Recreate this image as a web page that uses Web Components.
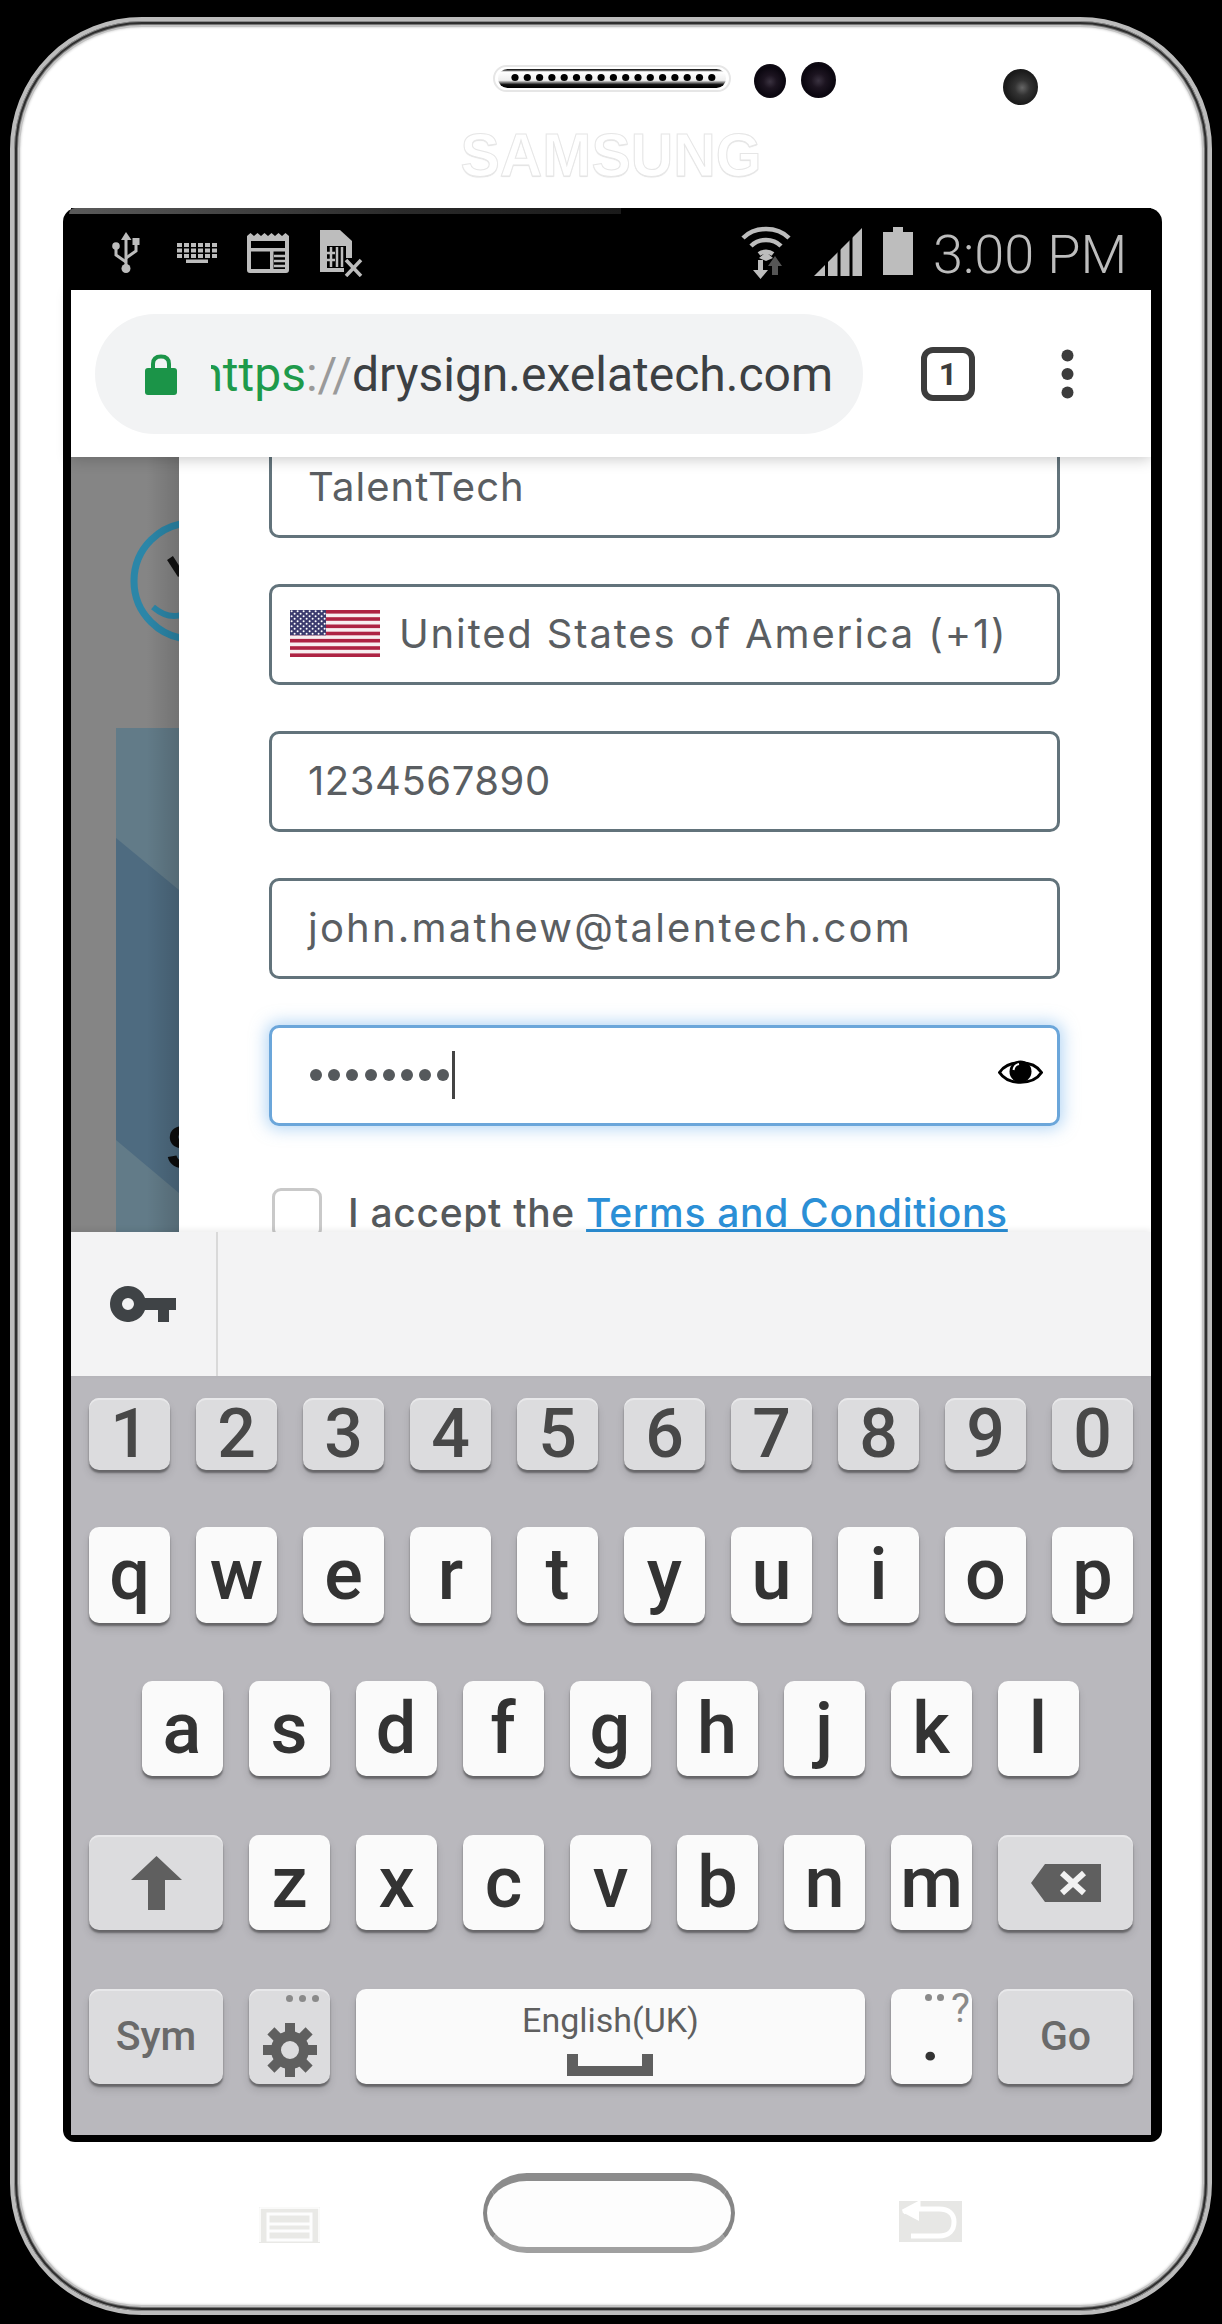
<!DOCTYPE html>
<html lang="en">
<head>
<meta charset="utf-8">
<title>Sign up</title>
<style>
  html, body { margin: 0; background: #000; }
  body { width: 1222px; height: 2324px; overflow: hidden; font-family: Roboto, sans-serif; }
</style>
</head>
<body>
<phone-frame>
  <status-bar slot="screen"></status-bar>
  <browser-bar slot="screen"></browser-bar>
  <page-view slot="screen">
    <form-field style="letter-spacing:1.05px">TalentTech</form-field>
    <form-field style="letter-spacing:1.85px">
      <svg slot="lead" width="90" height="47" viewBox="0 0 90 47">
        <defs>
          <pattern id="stars" width="6" height="5" patternUnits="userSpaceOnUse"><circle cx="1.6" cy="1.3" r="1" fill="#fff"/><circle cx="4.6" cy="3.8" r="1" fill="#fff"/></pattern>
        </defs>
        <rect width="90" height="47" fill="#f8eef0"/>
        <g fill="#ae2343">
          <rect y="0" width="90" height="3.6"/><rect y="7.2" width="90" height="3.6"/><rect y="14.5" width="90" height="3.6"/><rect y="21.7" width="90" height="3.6"/><rect y="28.9" width="90" height="3.6"/><rect y="36.2" width="90" height="3.6"/><rect y="43.4" width="90" height="3.6"/>
        </g>
        <rect width="36" height="25.3" fill="#3c3b6e"/>
        <rect width="36" height="25.3" fill="url(#stars)"/>
      </svg>
      United States of America (+1)
    </form-field>
    <form-field style="letter-spacing:.55px">1234567890</form-field>
    <form-field style="letter-spacing:2.2px">john.mathew@talentech.com</form-field>
    <form-field focused>
      <pass-dots count="8"></pass-dots>
      <svg slot="trail" width="45" height="29" viewBox="0 0 45 29">
        <path d="M1.5 14.5C10 1.5 35 1.5 43.5 14.5 35 27.5 10 27.5 1.5 14.5Z" fill="none" stroke="#000" stroke-width="3"/>
        <circle cx="22.5" cy="13.5" r="11" fill="#000"/>
        <path d="M15.5 12C16 8.5 18.5 6.5 21 6" fill="none" stroke="#fff" stroke-width="2"/>
      </svg>
    </form-field>
    <terms-row>I accept the <a>Terms and Conditions</a></terms-row>
  </page-view>
  <suggest-bar slot="screen"></suggest-bar>
  <key-board slot="screen">
    <kb-row h="72" top="22">
      <kb-key kind="num">1</kb-key><kb-key kind="num">2</kb-key><kb-key kind="num">3</kb-key><kb-key kind="num">4</kb-key><kb-key kind="num">5</kb-key><kb-key kind="num">6</kb-key><kb-key kind="num">7</kb-key><kb-key kind="num">8</kb-key><kb-key kind="num">9</kb-key><kb-key kind="num">0</kb-key>
    </kb-row>
    <kb-row h="96" top="57">
      <kb-key>q</kb-key><kb-key>w</kb-key><kb-key>e</kb-key><kb-key>r</kb-key><kb-key>t</kb-key><kb-key>y</kb-key><kb-key>u</kb-key><kb-key>i</kb-key><kb-key>o</kb-key><kb-key>p</kb-key>
    </kb-row>
    <kb-row h="95" top="58" style="padding-right:2px">
      <kb-key>a</kb-key><kb-key>s</kb-key><kb-key>d</kb-key><kb-key>f</kb-key><kb-key>g</kb-key><kb-key>h</kb-key><kb-key>j</kb-key><kb-key>k</kb-key><kb-key>l</kb-key>
    </kb-row>
    <kb-row h="95" top="59">
      <kb-key kind="func" w="134"><svg width="51" height="54" viewBox="0 0 51 54"><path d="M25.5 0 51 24H34V54H17V24H0Z" fill="#5f5f5f"/></svg></kb-key>
      <kb-key>z</kb-key><kb-key>x</kb-key><kb-key>c</kb-key><kb-key>v</kb-key><kb-key>b</kb-key><kb-key>n</kb-key><kb-key>m</kb-key>
      <kb-key kind="func" w="135"><svg width="70" height="38" viewBox="0 0 70 38"><path d="M14 0H70V38H14L0 19Z" fill="#5f5f5f"/><path d="M31 9 53 29M53 9 31 29" stroke="#f2f2f2" stroke-width="6"/></svg></kb-key>
    </kb-row>
    <kb-row h="95" top="59">
      <kb-key kind="func" w="134" size="41">Sym</kb-key>
      <kb-key kind="func">
        <key-dots slot="over" style="top:6px;right:11px"></key-dots>
        <svg style="margin-top:26px" width="54" height="54" viewBox="0 0 54 54"><g fill="#5f5f5f"><rect x="22" y="0" width="10" height="54"/><rect x="0" y="22" width="54" height="10"/><rect x="22" y="0" width="10" height="54" transform="rotate(45 27 27)"/><rect x="22" y="0" width="10" height="54" transform="rotate(-45 27 27)"/></g><circle cx="27" cy="27" r="14" fill="#dcdcde" stroke="#5f5f5f" stroke-width="10"/></svg>
      </kb-key>
      <kb-key w="509" size="34" weight="400" color="#5f5f5f">
        <space-label>English(UK)</space-label>
      </kb-key>
      <kb-key>
        <period-mark slot="over"></period-mark>
      </kb-key>
      <kb-key kind="func" w="135" size="41">Go</kb-key>
    </kb-row>
  </key-board>
</phone-frame>

<script>
class PhoneFrame extends HTMLElement {
  constructor() {
    super();
    this.attachShadow({ mode: "open" });
    let dots = "";
    for (let i = 0; i < 17; i++) dots += `<circle cx="${22 + i * 12.3}" cy="12.5" r="3.6" fill="#000"/>`;
    this.shadowRoot.innerHTML = /* html */`
      <style>
        :host {
          display: block; box-sizing: border-box;
          width: 1202px; height: 2298px; margin: 17px 0 0 10px;
          background: #fff;
          border: 4px solid #bcbcbc;
          border-radius: 132px;
          box-shadow: inset 0 0 0 1px #888, inset 0 0 0 3px #2e2e2e, inset 0 0 0 4px #777, inset 0 0 0 6px #c4c4c4, inset 0 0 2px 7px #e2e2e2;
        }
        .head { height: 187px; box-sizing: border-box; }
        .row { display: flex; align-items: flex-start; padding-left: 479px; }
        .speaker { margin-top: 44px; }
        .cam { border-radius: 50%; flex: none; background: radial-gradient(circle at 50% 52%, #3a3240 0, #1c1420 28%, #0b0710 60%, #17121b 100%); }
        .cam1 { width: 32px; height: 34px; margin: 43px 0 0 23px; }
        .cam2 { width: 35px; height: 36px; margin: 41px 0 0 15px; }
        .cam3 { width: 35px; height: 36px; margin: 48px 0 0 167px; background: radial-gradient(circle at 55% 52%, #666 0, #333 28%, #1c1c1c 60%, #111 100%); }
        .brand {
          font: 700 62px/1 "Liberation Sans", sans-serif; color: #fff;
          -webkit-text-stroke: 1px #e6e6e6;
          margin: 19px 0 0 439px; width: 300px; text-align: center;
          transform: scaleX(.95); transform-origin: center;
          text-shadow: 0 1px 1px #e0e0e0;
        }
        .screen {
          position: relative; box-sizing: border-box; width: 1099px; margin-left: 49px;
          background: #000; padding: 0 11px 7px 8px;
          border-radius: 14px 14px 12px 12px;
        }
        .screen::before {
          content: ""; position: absolute; left: 6px; top: 0; width: 552px; height: 6px;
          background: linear-gradient(90deg, #5a5a5a, #2a2a2a 60%, #1a1a1a);
          border-radius: 10px 0 0 0;
        }
        .foot { display: flex; align-items: flex-start; padding-left: 245px; }
        .menu { margin-top: 65px; }
        .home {
          box-sizing: border-box; width: 252px; height: 80px; margin: 31px 0 0 163px;
          border-radius: 46px / 42px; background: #fdfdfd;
          border: 4px solid #868686; border-top-width: 8px; border-bottom-width: 6px;
          border-top-color: #8c8c8c; border-bottom-color: #a0a0a0;
        }
        .back { margin: 59px 0 0 164px; }
      </style>
      <div class="head">
        <div class="row">
          <svg class="speaker" width="238" height="27" viewBox="0 0 238 27">
            <defs><linearGradient id="g" x1="0" y1="0" x2="0" y2="1"><stop offset=".05" stop-color="#222"/><stop offset=".15" stop-color="#fff"/><stop offset=".6" stop-color="#eee"/><stop offset=".82" stop-color="#111"/><stop offset="1" stop-color="#000"/></linearGradient></defs>
            <rect x="1" y="1" width="236" height="25" rx="12.5" fill="#fff" stroke="#e6e6e6" stroke-width="2"/>
            <rect x="5" y="4" width="228" height="19" rx="9.5" fill="url(#g)"/>
            ${dots}
          </svg>
          <div class="cam cam1"></div>
          <div class="cam cam2"></div>
          <div class="cam cam3"></div>
        </div>
        <div class="brand">SAMSUNG</div>
      </div>
      <div class="screen"><slot name="screen"></slot></div>
      <div class="foot">
        <svg class="menu" width="61" height="36" viewBox="0 0 61 36">
          <rect width="61" height="36" fill="#e9e9e6"/>
          <path d="M1 35V1H60V35" fill="none" stroke="#fff" stroke-width="1.5"/>
          <path d="M9 33V7H52V33ZM10 17H51M10 24H51" fill="none" stroke="#fdfdfd" stroke-width="3"/>
        </svg>
        <div class="home"></div>
        <svg class="back" width="63" height="41" viewBox="0 0 63 41">
          <rect width="63" height="41" fill="#e7e7e5"/>
          <path d="M4 11 19 3V8H40C50 8 55 13 55 21 55 29 50 35 40 35H12" fill="none" stroke="#fff" stroke-width="5"/>
          <path d="M3 11 20 1V20Z" fill="#fff"/>
        </svg>
      </div>
    `;
  }
}
customElements.define("phone-frame", PhoneFrame);

class StatusBar extends HTMLElement {
  constructor() {
    super();
    this.attachShadow({ mode: "open" });
    this.shadowRoot.innerHTML = /* html */`
      <style>
        :host { display: flex; align-items: flex-start; height: 82px; background: #000; color: #bdbdbd; }
        svg { flex: none; display: block; }
        .usb { margin: 24px 0 0 41px; }
        .kbd { margin: 35px 0 0 37px; }
        .note { margin: 25px 0 0 30px; }
        .sim { margin: 22px 0 0 31px; }
        .wifi { margin: 17px 0 0 378px; }
        .sig { margin: 20px 0 0 23px; }
        .bat { margin: 19px 0 0 21px; }
        .time { font: 300 54px/1 Roboto, sans-serif; margin: 20px 0 0 20px; white-space: nowrap; }
      </style>
      <svg class="usb" width="28" height="41" viewBox="0 0 28 41" fill="#bdbdbd" stroke="none">
        <path d="M14 0 19.5 8H9Z"/><rect x="12.5" y="6" width="3" height="30"/><circle cx="14" cy="36.5" r="4.5"/>
        <path d="M14 30 4 23V16M14 26 24 19V12" fill="none" stroke="#bdbdbd" stroke-width="3"/>
        <circle cx="4" cy="14" r="3.8"/><rect x="20.5" y="6" width="7" height="7"/>
      </svg>
      <svg class="kbd" width="40" height="20" viewBox="0 0 40 20" fill="#bdbdbd">
        <path d="M0 0h5v4H0zM7 0h5v4H7zM14 0h5v4h-5zM21 0h5v4h-5zM28 0h5v4h-5zM35 0h5v4h-5zM0 5.500h5v4H0zM7 5.500h5v4H7zM14 5.500h5v4h-5zM21 5.500h5v4h-5zM28 5.500h5v4h-5zM35 5.500h5v4h-5zM0 11h5v4H0zM7 11h5v4H7zM14 11h5v4h-5zM21 11h5v4h-5zM28 11h5v4h-5zM35 11h5v4h-5zM9 16.500h22V20H9z"/>
      </svg>
      <svg class="note" width="42" height="40" viewBox="0 0 42 40">
        <path d="M0 3 3.500 0 7 3 10.500 0 14 3 17.500 0 21 3 24.500 0 28 3 31.500 0 35 3 38.500 0 42 3V37Q42 40 39 40H3Q0 40 0 37Z" fill="#bdbdbd"/>
        <rect x="4" y="8" width="34" height="28" fill="#000"/>
        <rect x="4" y="15" width="34" height="3.500" fill="#bdbdbd"/>
        <rect x="23" y="15" width="3.500" height="21" fill="#bdbdbd"/>
        <path d="M27 23H38M27 28H38M27 33H38" stroke="#bdbdbd" stroke-width="2.500"/>
      </svg>
      <svg class="sim" width="43" height="47" viewBox="0 0 43 47">
        <path d="M0 0H20L32 11V42H0Z" fill="#bdbdbd"/>
        <rect x="7" y="16" width="19" height="22" fill="#000"/>
        <path d="M11 17V37M17 17V37M22 17V37M7 23H15M7 30H15" stroke="#bdbdbd" stroke-width="2.500"/>
        <rect x="24" y="28" width="19" height="19" fill="#000"/>
        <path d="M26 30 41 46M41 30 26 46" stroke="#bdbdbd" stroke-width="3.500"/>
      </svg>
      <svg class="wifi" width="50" height="54" viewBox="0 0 50 54">
        <g fill="none" stroke="#bdbdbd" stroke-width="4.500">
          <path d="M2 13C14 1 36 1 48 13"/><path d="M10 21C18 13 32 13 40 21"/>
          <path d="M18 29C22 26 28 26 32 29"/>
        </g>
        <path d="M18 33 25 27 32 33 25 36Z" fill="#bdbdbd"/>
        <path d="M17 35h5v10h5L19.500 54 12 45h5Z" fill="#bdbdbd"/>
        <path d="M34 31 41 41h-4v9h-6v-9h-4Z" fill="#555"/>
      </svg>
      <svg class="sig" width="48" height="48" viewBox="0 0 48 48">
        <path d="M0 48 48 0V48Z" fill="#bdbdbd"/>
        <path d="M12.500 0V48M25 0V48M37 0V48" stroke="#000" stroke-width="3"/>
      </svg>
      <svg class="bat" width="30" height="48" viewBox="0 0 30 48"><path d="M10 0H20V5H30V48H0V5H10Z" fill="#bdbdbd"/></svg>
      <span class="time">3:00 PM</span>
    `;
  }
}
customElements.define("status-bar", StatusBar);

class BrowserBar extends HTMLElement {
  constructor() {
    super();
    this.attachShadow({ mode: "open" });
    this.shadowRoot.innerHTML = /* html */`
      <style>
        :host {
          display: flex; align-items: flex-start; position: relative; z-index: 2;
          height: 167px; background: #fff; box-shadow: 0 2px 14px rgba(0,0,0,.22);
          padding: 24px 0 0 24px; box-sizing: border-box;
        }
        .pill {
          display: flex; align-items: center; box-sizing: border-box;
          width: 768px; height: 120px; background: #f2f3f4; border-radius: 60px; padding-left: 50px;
        }
        .lock { flex: none; }
        .url {
          display: flex; justify-content: flex-end; overflow: hidden;
          width: 622px; margin-left: 34px; padding-top: 2px;
          font: 400 48px/60px Roboto, sans-serif; color: #3c4043; white-space: nowrap;
        }
        .url span { flex: none; }
        .sec { color: #1e9a4b; }
        .sep { color: #9a9a9a; }
        .tab {
          box-sizing: border-box; display: flex; align-items: center; justify-content: center;
          width: 54px; height: 54px; margin: 33px 0 0 58px;
          border: 6px solid #3c3c3c; border-radius: 12px;
          font: 700 32px/1 Roboto, sans-serif; color: #3c3c3c;
        }
        .more { display: block; margin: 35px 0 0 86px; }
      </style>
      <div class="pill">
        <svg class="lock" width="32" height="41" viewBox="0 0 32 41">
          <path d="M8 16V10C8 5 11 2.500 16 2.500S24 5 24 10V16" fill="none" stroke="#1b9448" stroke-width="4"/>
          <rect y="14" width="32" height="27" rx="3" fill="#1b9448"/>
        </svg>
        <div class="url"><span><span class="sec">https</span><span class="sep">://</span>drysign.exelatech.com</span></div>
      </div>
      <div class="tab">1</div>
      <svg class="more" width="13" height="50" viewBox="0 0 13 50" fill="#3c3c3c"><circle cx="6.500" cy="6.500" r="6"/><circle cx="6.500" cy="25" r="6"/><circle cx="6.500" cy="43.500" r="6"/></svg>
    `;
  }
}
customElements.define("browser-bar", BrowserBar);

class PageView extends HTMLElement {
  constructor() {
    super();
    this.attachShadow({ mode: "open" });
    this.shadowRoot.innerHTML = /* html */`
      <style>
        :host { display: flex; height: 775px; overflow: hidden; background: #fff; }
        .backdrop { flex: none; display: block; width: 108px; height: 775px; }
        .panel { flex: 1; display: flex; flex-direction: column; gap: 46px; padding: 0 90px; margin-top: -20px; background: #fff; }
      </style>
      <svg class="backdrop" width="108" height="775" viewBox="0 0 108 775">
        <defs><linearGradient id="edge" x1="0" x2="1" y1="0" y2="0"><stop offset=".7" stop-color="#000" stop-opacity="0"/><stop offset="1" stop-color="#000" stop-opacity=".14"/></linearGradient></defs>
        <rect width="108" height="775" fill="#858585"/>
        <rect x="45" y="271" width="63" height="504" fill="#627b88"/>
        <path d="M45 381 108 433V736L45 683Z" fill="#4e6b80"/>
        <circle cx="121" cy="124" r="58" fill="none" stroke="#2b86a8" stroke-width="7"/>
        <path d="M82 150Q96 162 110 158" fill="none" stroke="#2b86a8" stroke-width="6"/>
        <path d="M99 101 110 118" stroke="#111" stroke-width="7"/>
        <text x="95" y="711" font-family="Liberation Sans, sans-serif" font-weight="700" font-size="62" fill="#0c0c0c">S</text>
        <rect width="108" height="775" fill="url(#edge)"/>
      </svg>
      <div class="panel"><slot></slot></div>
    `;
  }
}
customElements.define("page-view", PageView);

class FormField extends HTMLElement {
  constructor() {
    super();
    this.attachShadow({ mode: "open" });
    this.shadowRoot.innerHTML = /* html */`
      <style>
        :host {
          display: flex; align-items: center; flex: none; box-sizing: border-box;
          width: 791px; height: 101px; padding: 0 38px 2px 36px;
          background: #fff; border: 3px solid #62737b; border-radius: 10px;
          font: 400 40px/1 Inter, "Open Sans", sans-serif; letter-spacing: 2px; color: #5a5e62; white-space: nowrap;
        }
        :host([focused]) { border-color: #6ba6da; box-shadow: 0 0 16px 3px rgba(110,175,235,.5); }
        slot[name=lead]::slotted(svg) { flex: none; margin: 0 19px 0 -18px; }
        slot[name=trail]::slotted(svg) { flex: none; margin: 0 -24px 4px auto; }
      </style>
      <slot name="lead"></slot><slot></slot><slot name="trail"></slot>
    `;
  }
}
customElements.define("form-field", FormField);

class PassDots extends HTMLElement {
  constructor() {
    super();
    this.attachShadow({ mode: "open" });
  }
  connectedCallback() {
    const n = Number(this.getAttribute("count") || 0);
    this.shadowRoot.innerHTML = /* html */`
      <style>
        :host { display: flex; align-items: center; gap: 6.200px; height: 48px; margin-left: 2px; }
        i { width: 12px; height: 12px; border-radius: 50%; background: #55595c; }
        b { width: 3px; height: 48px; background: #444; margin-left: -4px; }
      </style>
      ${"<i></i>".repeat(n)}<b></b>
    `;
  }
}
customElements.define("pass-dots", PassDots);

class TermsRow extends HTMLElement {
  constructor() {
    super();
    this.attachShadow({ mode: "open" });
    this.shadowRoot.innerHTML = /* html */`
      <style>
        :host {
          display: flex; align-items: flex-start; flex: none; margin-top: 16px; padding-left: 3px;
          font: 500 39px/1 Inter, "Open Sans", sans-serif; letter-spacing: .7px; color: #55595c; white-space: nowrap;
        }
        .box { flex: none; box-sizing: border-box; width: 50px; height: 50px; border: 3px solid #c9c9c9; border-radius: 9px; margin-right: 26px; }
        .txt { margin-top: 5px; }
        ::slotted(a) { color: #2b8fd6; text-decoration: underline; }
      </style>
      <div class="box"></div>
      <div class="txt"><slot></slot></div>
    `;
  }
}
customElements.define("terms-row", TermsRow);

class SuggestBar extends HTMLElement {
  constructor() {
    super();
    this.attachShadow({ mode: "open" });
    this.shadowRoot.innerHTML = /* html */`
      <style>
        :host {
          display: flex; position: relative; z-index: 2; box-sizing: border-box; height: 144px;
          background: #f3f3f4; box-shadow: 0 -2px 6px rgba(0,0,0,.08);
        }
        .cell { flex: none; box-sizing: border-box; width: 147px; height: 144px; border-right: 2px solid #d9d9d9; padding: 54px 0 0 39px; }
        svg { display: block; }
      </style>
      <div class="cell">
        <svg width="66" height="36" viewBox="0 0 66 36">
          <path d="M18 0A18 18 0 0 1 35 12H66V24H59V36H48V24H35A18 18 0 1 1 18 0ZM18 12A6 6 0 1 0 18 24 6 6 0 0 0 18 12Z" fill="#3f4346" fill-rule="evenodd"/>
        </svg>
      </div>
    `;
  }
}
customElements.define("suggest-bar", SuggestBar);

class KeyBoard extends HTMLElement {
  constructor() {
    super();
    this.attachShadow({ mode: "open" });
    this.shadowRoot.innerHTML = /* html */`
      <style>
        :host { display: block; box-sizing: border-box; height: 759px; padding: 0 18px; background: #b9b8bd; overflow: hidden; }
      </style>
      <slot></slot>
    `;
  }
}
customElements.define("key-board", KeyBoard);

class KbRow extends HTMLElement {
  constructor() {
    super();
    this.attachShadow({ mode: "open" });
    this.shadowRoot.innerHTML = /* html */`
      <style>
        :host { display: flex; justify-content: center; gap: 26px; }
      </style>
      <slot></slot>
    `;
  }
  connectedCallback() {
    this.style.height = this.getAttribute("h") + "px";
    this.style.marginTop = this.getAttribute("top") + "px";
  }
}
customElements.define("kb-row", KbRow);

class KbKey extends HTMLElement {
  constructor() {
    super();
    this.attachShadow({ mode: "open" });
    this.shadowRoot.innerHTML = /* html */`
      <style>
        :host {
          display: flex; align-items: center; justify-content: center; flex: none; position: relative;
          width: 81px; border-radius: 10px; background: #fafafa; color: #333;
          font: 500 72px/1 Roboto, sans-serif;
          box-shadow: 0 3px 2px rgba(0,0,0,.38), 0 6px 9px rgba(0,0,0,.12);
        }
        :host([kind=num]), :host([kind=func]) {
          background: #dcdcde;
          box-shadow: inset 0 2px 0 #e8e8ea, 0 3px 2px rgba(0,0,0,.38), 0 6px 9px rgba(0,0,0,.12);
        }
        :host([kind=num]) { font-size: 68px; color: #484848; }
        :host([kind=func]) { color: #6a6a6a; }
        ::slotted(svg) { display: block; }
      </style>
      <slot></slot><slot name="over"></slot>
    `;
  }
  connectedCallback() {
    if (this.hasAttribute("w")) this.style.width = this.getAttribute("w") + "px";
    if (this.hasAttribute("size")) this.style.fontSize = this.getAttribute("size") + "px";
    if (this.hasAttribute("weight")) this.style.fontWeight = this.getAttribute("weight");
    if (this.hasAttribute("color")) this.style.color = this.getAttribute("color");
  }
}
customElements.define("kb-key", KbKey);

class KeyDots extends HTMLElement {
  constructor() {
    super();
    this.attachShadow({ mode: "open" });
    this.shadowRoot.innerHTML = /* html */`
      <style>
        :host { display: flex; gap: 6px; position: absolute; }
        i { width: 7px; height: 7px; border-radius: 50%; background: #8a8a8a; }
      </style>
      <i></i><i></i><i></i>
    `;
  }
}
customElements.define("key-dots", KeyDots);

class SpaceLabel extends HTMLElement {
  constructor() {
    super();
    this.attachShadow({ mode: "open" });
    this.shadowRoot.innerHTML = /* html */`
      <style>
        :host { display: flex; flex-direction: column; align-items: center; gap: 17px; margin-top: 6px; }
        svg { display: block; }
      </style>
      <slot></slot>
      <svg width="86" height="22" viewBox="0 0 86 22"><path d="M0 0H11V12H75V0H86V22H0Z" fill="#5f5f5f"/></svg>
    `;
  }
}
customElements.define("space-label", SpaceLabel);

class PeriodMark extends HTMLElement {
  constructor() {
    super();
    this.attachShadow({ mode: "open" });
    this.shadowRoot.innerHTML = /* html */`
      <style>
        :host { display: block; position: absolute; inset: 0; font-family: Roboto, sans-serif; }
        .q { position: absolute; right: 2px; top: 0; font: 400 40px/1 Roboto, sans-serif; color: #8a8a8a; }
        .dots { position: absolute; left: 34px; top: 5px; display: flex; gap: 5px; }
        .dots i { width: 7px; height: 7px; border-radius: 50%; background: #8a8a8a; }
        .p { position: absolute; left: 0; width: 81px; text-align: center; top: 21px; font: 700 60px/1 Roboto, sans-serif; color: #333; padding-right: 2px; box-sizing: border-box; }
      </style>
      <div class="dots"><i></i><i></i></div>
      <span class="q">?</span>
      <span class="p">.</span>
    `;
  }
}
customElements.define("period-mark", PeriodMark);
</script>
</body>
</html>
